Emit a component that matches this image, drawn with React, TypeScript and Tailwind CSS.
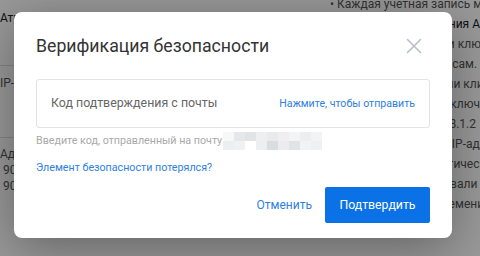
import React from "react";

const notes = [
	"Правила использования API-ключей",
	"В целях безопасности ключ",
	"доступен только вам сам. Не",
	"делитесь им с другими клиентами",
	"Используйте разные ключи",
	"IP: 192.168.1.1,192.168.1.2",
	"Ключ без привязки с IP-адресом",
	"будет удален автоматически,",
	"если его не использовали",
	"в течение долгого времени",
];

const pixels = [
	["#f7f7f8", "#e6e7ea", "#e2e3e6", "#eeeff1", "#e9eaec", "#f0eeee", "#f3f4f7", "#eceef0", "#f2f3f5"],
	["#eceef0", "#f1f1f3", "#ffffff", "#eceef0", "#d9dce1", "#ececee", "#e2e3e5", "#f2f3f5", "#eef0f2"],
];

const CloseIcon = () => (
	<svg width="16" height="16" viewBox="0 0 16 16" fill="none">
		<path d="M1.5 1.5 L14.5 14.5 M14.5 1.5 L1.5 14.5" stroke="#b7bfcc" strokeWidth="1.6" strokeLinecap="round" />
	</svg>
);

// the page behind the dialog, dimmed by the overlay
const Background = () => (
	<div className="flex h-full w-full bg-white text-[12px] text-[#555]">
		<div className="flex w-[322px] shrink-0 flex-col">
			<div className="h-[65px] pt-[9px] text-[#222]">Атрибуты ключа</div>
			<div className="h-px bg-[#ddd]" />
			<div className="h-[71px] pt-[8px]">IP-адреса</div>
			<div className="h-px bg-[#ddd]" />
			<div className="flex flex-col pt-[8px] leading-[16px]">
				<span>Адрес</span>
				<span className="pl-[3px]">90.0.0.1</span>
				<span className="pl-[3px]">90.0.0.2</span>
			</div>
		</div>
		<div className="flex min-w-0 flex-1 flex-col overflow-hidden pl-[8px] leading-[20px]">
			<div className="-mt-[6px] whitespace-nowrap">• Каждая учетная запись может</div>
			{notes.map((n, i) => (
				<div key={i} className={["whitespace-nowrap", i === 0 ? "text-[#222]" : ""].join(" ")}>
					{n}
				</div>
			))}
		</div>
	</div>
);

export default function App() {
	return (
		<div
			className="relative h-[256px] w-[480px] overflow-hidden"
			style={{ fontFamily: 'Roboto, "Noto Sans", sans-serif' }}
		>
			<Background />
			<div className="absolute inset-0 bg-[rgba(0,0,0,0.4)]" />
			<div className="absolute left-[14px] top-[12px] flex h-[226px] w-[438px] flex-col rounded-[8px] bg-white px-[22px] pt-[22px] pb-[15px] shadow-[0_10px_50px_rgba(0,0,0,0.35)]">
				<div className="flex h-[24px] items-center justify-between">
					<h2 className="text-[17.7px] leading-[24px] text-[#333]">Верификация безопасности</h2>
					<button className="mr-[8px]">
						<CloseIcon />
					</button>
				</div>
				<div className="mt-[21px] flex h-[49px] items-center justify-between rounded-[3px] border border-[#e3e3e3] pl-[14px] pr-[14px]">
					<span className="text-[12.4px] text-[#666]">Код подтверждения с почты</span>
					<span className="text-[10.6px] text-[#2f80e0]">Нажмите, чтобы отправить</span>
				</div>
				<div className="mt-[5px] flex h-[16px] items-center text-[10.7px] text-[#a9a9a9]">
					<span>Введите код, отправленный на почту</span>
					<div className="ml-[1px] flex flex-col">
						{pixels.map((row, r) => (
							<div key={r} className="flex">
								{row.map((c, i) => (
									<div key={i} className="h-[9px] w-[11px]" style={{ background: c }} />
								))}
							</div>
						))}
					</div>
				</div>
				<div className="mt-[11px] h-[16px] text-[10.7px] leading-[16px] text-[#2f80e0]">
					Элемент безопасности потерялся?
				</div>
				<div className="mt-auto flex items-center justify-end gap-[13px]">
					<button className="text-[12px] text-[#2f80e0]">Отменить</button>
					<button className="h-[36px] w-[105px] rounded-[2px] bg-[#0a72e6] text-[12.3px] text-white">
						Подтвердить
					</button>
				</div>
			</div>
		</div>
	);
}
